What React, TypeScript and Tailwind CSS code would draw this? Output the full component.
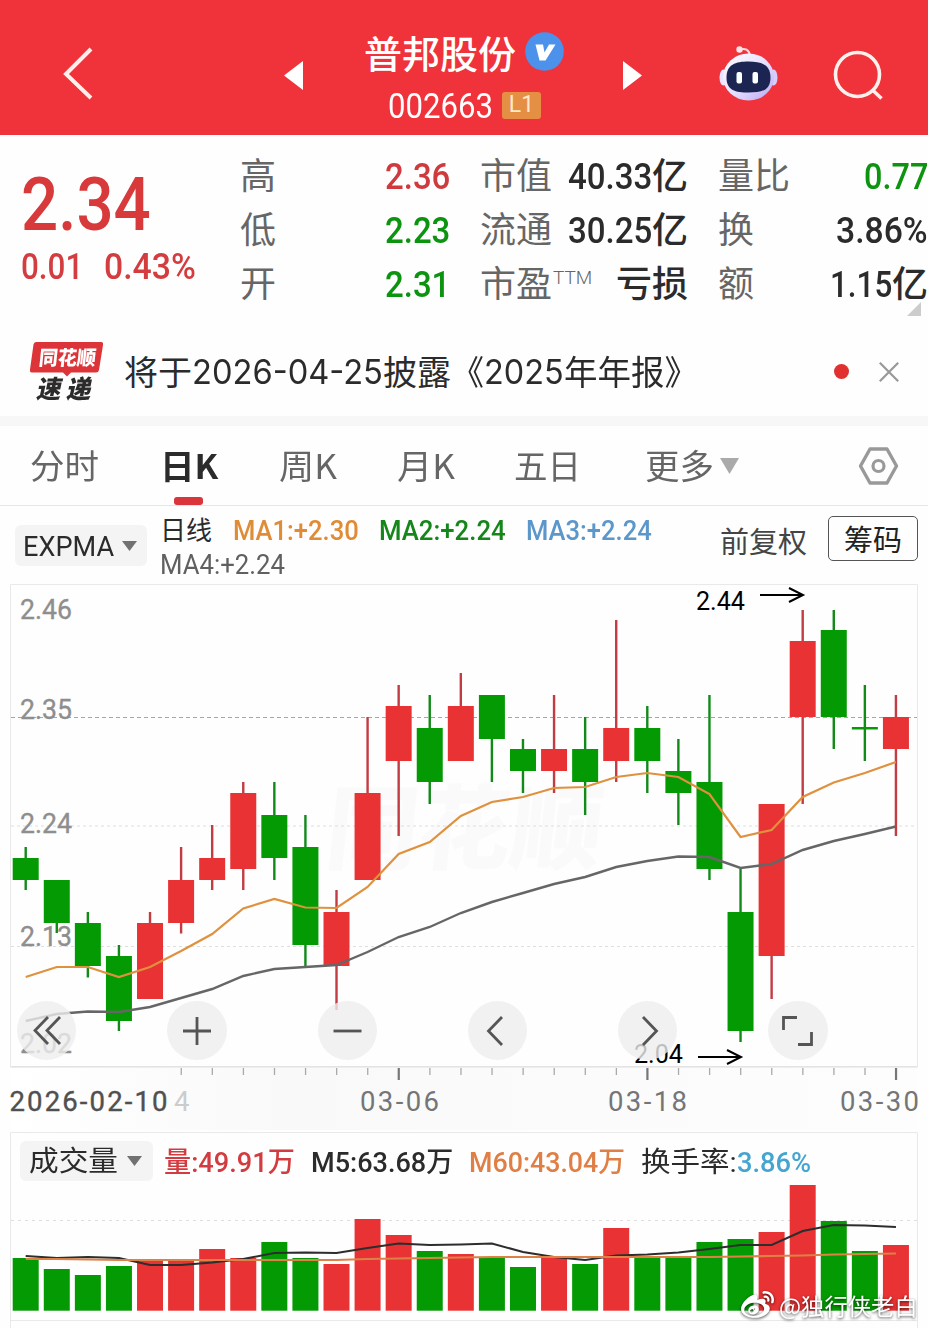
import { useLayoutEffect, useRef, type ReactNode } from "react";
import { FaWeibo } from "react-icons/fa";

const RED = "#e93234";
const GREEN = "#049a04";

/* One line of text, condensed or widened to fill the width of its box. */
function Fit({ className = "", children }: { className?: string; children: ReactNode }) {
  const box = useRef<HTMLSpanElement>(null);
  const text = useRef<HTMLSpanElement>(null);
  useLayoutEffect(() => {
    const b = box.current;
    const t = text.current;
    if (!b || !t) return;
    t.style.transform = `scaleX(${b.clientWidth / t.offsetWidth})`;
  }, []);
  return (
    <span ref={box} className={`block shrink-0 whitespace-nowrap ${className}`}>
      <span ref={text} className="inline-block origin-left">
        {children}
      </span>
    </span>
  );
}

type Candle = [string, number, number, number, number, number];

// direction, high, body top, body bottom, low, volume top
const candles: Candle[] = [
  ["g", 847, 858, 880, 890, 1258],
  ["g", 880, 880, 923, 933, 1269],
  ["g", 912, 923, 966, 977.5, 1275],
  ["g", 945, 956, 1021, 1031, 1266],
  ["r", 912, 923, 999, 999, 1260],
  ["r", 847, 880, 923, 933.5, 1260],
  ["r", 825, 858, 880, 890, 1249],
  ["r", 782, 793, 869, 890, 1258],
  ["g", 782, 815, 858, 880, 1242],
  ["g", 815, 847, 945, 967, 1258],
  ["r", 890, 912, 966, 1010, 1264],
  ["r", 717, 793, 880, 880, 1219],
  ["r", 685, 706, 761, 836, 1235],
  ["g", 695, 728, 782, 804, 1251],
  ["r", 673, 706, 761, 761, 1254],
  ["g", 695, 695, 739, 782, 1258],
  ["g", 739, 749, 771, 793, 1267],
  ["r", 695, 749, 771, 793, 1258],
  ["g", 717, 749, 782, 815, 1264],
  ["r", 620, 728, 761, 782, 1228],
  ["g", 706, 728, 761, 793, 1258],
  ["g", 739, 771, 793, 825, 1257],
  ["g", 695, 782, 869, 880, 1242],
  ["g", 869, 912, 1031, 1042, 1239],
  ["r", 804, 804, 956, 999, 1232],
  ["r", 610, 641, 717, 804, 1185],
  ["g", 610, 630, 717, 749, 1221],
  ["g", 685, 727, 729.5, 761, 1251],
  ["r", 695, 717, 749, 836, 1245],
];

const ma1 = [977, 967, 967, 977, 967, 951, 934, 908.5, 899, 907.5, 908, 887, 854, 842, 816, 802, 797, 788, 787, 777, 773, 777, 794, 837, 830, 797, 782.5, 773, 762];
const ma4 = [1021, 1014, 1011.5, 1012, 1007, 998, 989, 976, 969, 967, 965, 952, 937, 927, 913, 902, 893, 884, 877, 867, 861, 856.5, 857, 868, 864, 850, 841, 834, 826.5];
const m5 = [1256, 1258, 1257, 1258, 1265, 1265, 1262.5, 1259, 1253, 1252.5, 1253, 1248, 1243.5, 1245, 1244.5, 1243.5, 1252, 1257, 1260, 1255.5, 1254.5, 1252.5, 1249, 1245, 1245, 1231, 1225, 1225.5, 1227];
const m60 = [1259, 1259, 1259.5, 1260, 1260, 1260, 1260, 1260, 1260, 1260, 1260, 1259, 1258.5, 1258, 1257.5, 1257, 1257, 1257, 1257, 1257, 1257, 1257, 1257, 1256.5, 1256, 1255.5, 1254.5, 1254, 1253.5];

const cx = (i: number) => 25.7 + 31.08 * i;
const line = (ys: number[]) => ys.map((y, i) => `${cx(i)},${y}`).join(" ");

function Header() {
  return (
    <header className="flex h-[135px] items-start bg-[#f0323a] text-white">
      <svg className="ml-[62px] mt-[46px] h-14 w-8" viewBox="0 0 32 56" fill="none" stroke="#fff0ec" strokeWidth="4">
        <path d="M29 3 4 28 29 52" />
      </svg>
      <svg className="ml-[190px] mt-[61px] h-[29px] w-[19px]" viewBox="0 0 19 29" fill="#fff">
        <path d="M19 0v29L0 14.500Z" />
      </svg>
      <div className="ml-[61px] mt-[26px] w-[201px]">
        <div className="flex h-[52px] items-center">
          <Fit className="w-[152px] text-[38px] font-medium leading-[48px]">普邦股份</Fit>
          <svg className="ml-[9px] -mt-[1px] size-[39px]" viewBox="0 0 39 39">
            <circle cx="19.500" cy="19.500" r="19.300" fill="#4c92ea" />
            <path d="M10.500 12.500h7.500l1.500 8 4.500-8h6.500L20.500 28.500h-6Z" fill="#fff" />
          </svg>
        </div>
        <div className="ml-6 flex h-[54px] items-center">
          <Fit className="w-[105px] pt-[3px] font-['Roboto'] text-[35px] leading-[54px]">002663</Fit>
          <span className="ml-[9px] mt-px flex h-[27px] w-[39px] items-center justify-center rounded-[3px] bg-[#e58f45] font-['Roboto'] text-[23px] text-[#ffe9c8]">
            L1
          </span>
        </div>
      </div>
      <svg className="ml-[58px] mt-[61px] h-[29px] w-[19px]" viewBox="0 0 19 29" fill="#fff">
        <path d="M0 0v29l19-14.500Z" />
      </svg>
      <svg className="ml-[75px] mt-[44px] h-[58px] w-[62px]" viewBox="0 0 62 58">
        <defs>
          <linearGradient id="shell" x1="0" y1="0" x2="1" y2="1">
            <stop offset="0" stopColor="#fff" />
            <stop offset=".55" stopColor="#e4ddff" />
            <stop offset="1" stopColor="#b8a5f0" />
          </linearGradient>
        </defs>
        <path d="M23 5.500c5-1.500 9 0 10 6" fill="none" stroke="#ffd9dc" strokeWidth="2" />
        <circle cx="22.500" cy="5.500" r="3.200" fill="#ffe3e6" />
        <ellipse cx="6.500" cy="33.500" rx="4" ry="8" fill="#e9e3ff" />
        <ellipse cx="56.500" cy="33.500" rx="4" ry="8" fill="#d7ccfa" />
        <ellipse cx="31.500" cy="33" rx="25.500" ry="23.500" fill="url(#shell)" />
        <path d="M31.500 17.500c13 0 22 3 22 16s-9 15-22 15-22-2-22-15 9-16 22-16Z" fill="#1c2552" />
        <rect x="19.500" y="28" width="5.500" height="11.500" rx="2" fill="#fff" />
        <rect x="35.500" y="28" width="5.500" height="11.500" rx="2" fill="#fff" />
      </svg>
      <svg className="ml-[53px] mt-[49px] h-[54px] w-[54px]" viewBox="0 0 54 54" fill="none" stroke="#fff0ec" strokeWidth="3.600">
        <circle cx="25.500" cy="25.500" r="22" />
        <path d="m40 40.500 9.500 9" />
      </svg>
    </header>
  );
}

const LABEL = "h-[54px] text-[36px] leading-[48px] text-[#666]";
const UNIT = "text-[36px] font-medium leading-[48px]";
const VALUE = "h-[54px] font-['Roboto'] text-[37px] font-medium leading-[56px]";

function Quote() {
  return (
    <section className="relative flex h-[188px] pt-[14px]">
      <div className="ml-[21px] w-[219px] pt-[9px] font-['Roboto'] font-medium text-[#d8393b]">
        <Fit className="h-[94px] w-[130px] text-[74px] leading-[94px]">2.34</Fit>
        <div className="flex text-[36px] leading-[30px] text-[#d43d40]">
          <Fit className="w-[62px]">0.01</Fit>
          <Fit className="ml-[21px] w-[92px]">0.43%</Fit>
        </div>
      </div>
      <div className="w-[145px]">
        <div className={LABEL}>高</div>
        <div className={LABEL}>低</div>
        <div className={LABEL}>开</div>
      </div>
      <div>
        <Fit className={VALUE + " w-[65px] text-[#cf3a3f]"}>2.36</Fit>
        <Fit className={VALUE + " w-[65px] text-[#0c930f]"}>2.23</Fit>
        <Fit className={VALUE + " w-[65px] text-[#0c930f]"}>2.31</Fit>
      </div>
      <div className="ml-[30px] w-[208px] text-[#2b2b2b]">
        <div className="flex h-[54px] justify-between">
          <span className={LABEL}>市值</span>
          <div className="flex">
            <Fit className={VALUE + " w-[84px]"}>40.33</Fit>
            <span className={UNIT}>亿</span>
          </div>
        </div>
        <div className="flex h-[54px] justify-between">
          <span className={LABEL}>流通</span>
          <div className="flex">
            <Fit className={VALUE + " w-[84px]"}>30.25</Fit>
            <span className={UNIT}>亿</span>
          </div>
        </div>
        <div className="flex h-[54px]">
          <span className={LABEL}>市盈</span>
          <Fit className="ml-[1px] w-[39px] font-['Roboto'] text-[19px] font-light leading-[42px] text-[#666]">TTM</Fit>
          <span className={UNIT + " ml-auto"}>亏损</span>
        </div>
      </div>
      <div className="ml-[30px] w-[210px] text-[#2b2b2b]">
        <div className="flex h-[54px] justify-between">
          <span className={LABEL}>量比</span>
          <Fit className={VALUE + " w-[64px] text-[#0c930f]"}>0.77</Fit>
        </div>
        <div className="flex h-[54px] justify-between">
          <span className={LABEL}>换</span>
          <Fit className={VALUE + " w-[92px]"}>3.86%</Fit>
        </div>
        <div className="flex h-[54px] justify-between">
          <span className={LABEL}>额</span>
          <div className="flex">
            <Fit className={VALUE + " w-[62px]"}>1.15</Fit>
            <span className={UNIT}>亿</span>
          </div>
        </div>
      </div>
      <svg className="absolute left-[907px] top-[167px] size-[14px]" viewBox="0 0 14 14">
        <path d="M14 0v14H0Z" fill="#ccc" />
      </svg>
    </section>
  );
}

function News() {
  return (
    <section className="flex h-[103px] items-start border-b-[10px] border-[#f7f7f7] text-[#2b2b2b]">
      <div className="relative ml-[30px] mt-[19px] w-[73px] shrink-0">
        <svg className="block h-9 w-[73px]" viewBox="0 0 73 36">
          <path d="M6 0h65q2.500 0 2 3l-4 25q-.5 2.500-3 2.500H41l-4 4-4-4H2q-2.500 0-2-3L3.500 2.500Q4 0 6 0Z" fill="#dc3438" />
        </svg>
        <div className="absolute left-[9px] top-[3px]">
          <Fit className="w-[57px] -skew-x-6 text-[20px] font-black leading-6 text-white">同花顺</Fit>
        </div>
        <Fit className="-mt-[6px] ml-[8px] w-[55px] -skew-x-12 text-[25px] font-black leading-[30px]">速 递</Fit>
      </div>
      <div className="ml-[21px] flex text-[34px] leading-[96px]">
        <span>将于</span>
        <Fit className="w-[191px] pt-px font-['Inter']">2026-04-25</Fit>
        <span>披露</span>
        <Fit className="w-[33px]">《</Fit>
        <Fit className="w-[80px] pt-px font-['Inter']">2025</Fit>
        <Fit className="w-[134px]">年年报》</Fit>
      </div>
      <span className="ml-auto mt-[41px] size-[15px] rounded-full bg-[#e0302f]" />
      <svg className="ml-[30px] mr-[29px] mt-[39px] size-5" viewBox="0 0 20 20" stroke="#999" strokeWidth="2.200">
        <path d="m.8.8 18.400 18.400M19.200.8.8 19.200" />
      </svg>
    </section>
  );
}

function Tabs() {
  return (
    <nav className="flex h-20 border-b border-[#e6e6e6] text-[34px] leading-[78px] text-[#666]">
      <Fit className="ml-[30px] w-[69px]">分时</Fit>
      <div className="relative ml-[61px] w-[58px] font-bold text-[#2b2b2b]">
        <Fit className="w-[58px]">日K</Fit>
        <span className="absolute left-[14px] top-[71px] h-2 w-[29px] rounded-[3px] bg-[#d9353a]" />
      </div>
      <Fit className="ml-[61px] w-[58px]">周K</Fit>
      <Fit className="ml-[60px] w-[58px]">月K</Fit>
      <Fit className="ml-[59px] w-[67px]">五日</Fit>
      <Fit className="ml-[64px] w-[69px]">更多</Fit>
      <svg className="ml-[6px] mt-8 h-4 w-[19px]" viewBox="0 0 19 16">
        <path d="M0 0h19L9.500 16Z" fill="#aaa" />
      </svg>
      <svg className="ml-auto mr-[29px] mt-5 h-10 w-[41px]" viewBox="0 0 41 40" fill="none" stroke="#999" strokeLinejoin="round">
        <path d="M12 3h17l9.500 17L29 37H12L2.500 20Z" strokeWidth="3.400" />
        <circle cx="20.500" cy="20" r="5.500" strokeWidth="3.200" />
      </svg>
    </nav>
  );
}

function Down() {
  return (
    <svg className="h-[10px] w-[15px]" viewBox="0 0 15 10">
      <path d="M0 0h15L7.500 10Z" fill="#717171" />
    </svg>
  );
}

function Indicators() {
  return (
    <section className="flex h-[74px] text-[26px]">
      <div className="ml-[15px] mt-[19px] flex h-[41px] w-[132px] items-center rounded-md bg-[#f4f4f4] text-[#2b2b2b]">
        <Fit className="ml-[8px] mr-[8px] mt-[2px] w-[91px] font-['Roboto'] text-[28px]">EXPMA</Fit>
        <Down />
      </div>
      <div className="ml-[13px] pt-[8px] font-['Roboto','Noto_Sans_CJK_SC'] text-[28px] font-medium leading-[34px]">
        <div className="flex h-[34px]">
          <Fit className="w-[52px] text-[26px] font-normal text-[#2b2b2b]">日线</Fit>
          <Fit className="ml-[21px] w-[126px] text-[#e08b36]">MA1:+2.30</Fit>
          <Fit className="ml-[20px] w-[127px] text-[#15861a]">MA2:+2.24</Fit>
          <Fit className="ml-[20px] w-[126px] text-[#5b97cb]">MA3:+2.24</Fit>
        </div>
        <Fit className="w-[125px] font-normal text-[#606060]">MA4:+2.24</Fit>
      </div>
      <Fit className="ml-auto mt-[13px] w-[87px] text-[29px] leading-[42px] text-[#444]">前复权</Fit>
      <div className="ml-[21px] mr-[10px] mt-[10px] flex h-[45px] w-[90px] items-center justify-center rounded-[5px] border border-[#555] text-[29px] text-[#222]">
        <span className="-mt-[2px] leading-[40px]">筹码</span>
      </div>
    </section>
  );
}

function PriceChart() {
  const labels: [string, number][] = [
    ["2.46", 619],
    ["2.35", 718.5],
    ["2.24", 832.5],
    ["2.13", 946],
    ["2.02", 1053],
  ];
  return (
    <section className="relative h-[552px]">
      <svg className="block" width="928" height="552" viewBox="0 580 928 552" fontFamily="Roboto">
        <defs>
          <linearGradient id="axis" x1="0" y1="0" x2="1" y2="0">
            <stop offset="0" stopColor="#fff" />
            <stop offset=".3" stopColor="#f9f9f9" />
            <stop offset="1" stopColor="#fdfdfd" />
          </linearGradient>
        </defs>
        <rect x="11" y="1068" width="906" height="62" fill="url(#axis)" />
        <text x="322" y="862" fontFamily="Noto Sans CJK SC" fontWeight="900" fontSize="92" fill="#fafafa" transform="skewX(-6) translate(92 0)">
          同花顺
        </text>
        <g stroke="#e9e9e9" fill="none">
          <path d="M10.500 584.500H917.500V1066.500H10.500Z" />
          <path d="M10.500 1067H917.500" stroke="#dcdcdc" />
        </g>
        <path d="M11 717.500H917" stroke="#b3a58a" strokeDasharray="4 3" />
        <path d="M11 826H917M11 946.500H917" stroke="#dedede" strokeDasharray="3 3" />
        {candles.map(([d, high, top, bottom, low], i) => (
          <g key={i} fill={d === "r" ? RED : GREEN}>
            <rect x={cx(i) - 1.2} y={high} width="2.400" height={low - high} fill={d === "r" ? "#c23c44" : "#128a1a"} />
            <rect x={cx(i) - 13} y={top} width="26" height={bottom - top} />
          </g>
        ))}
        <polyline points={line(ma4)} fill="none" stroke="#666" strokeWidth="2.400" />
        <polyline points={line(ma1)} fill="none" stroke="#df913e" strokeWidth="2.200" />
        {labels.map(([t, y]) => (
          <text key={t} x="20" y={y} fontSize="28" fill="#8e8e8e" stroke="#8e8e8e" strokeWidth=".35" textLength="52" lengthAdjust="spacingAndGlyphs">
            {t}
          </text>
        ))}
        <g fontSize="26" fill="#000">
          <text x="696" y="610" textLength="49" lengthAdjust="spacingAndGlyphs">2.44</text>
          <text x="634" y="1063" textLength="49" lengthAdjust="spacingAndGlyphs">2.04</text>
        </g>
        <g stroke="#000" strokeWidth="2" fill="none">
          <path d="M760 595H802M789 588l14 7-14 7" />
          <path d="M698 1057H740M727 1050l14 7-14 7" />
        </g>
        {candles.map((_, i) =>
          i < 5 ? null : i === 12 || i === 20 || i === 28 ? (
            <rect key={i} x={cx(i) - 1} y="1068" width="2.200" height="12" fill="#777" />
          ) : (
            <rect key={i} x={cx(i) - 0.5} y="1068" width="1.300" height="7" fill="#aaa" />
          ),
        )}
        <g fontSize="27.500" fill="#757575">
          <text x="9.500" y="1110.500" textLength="158" lengthAdjust="spacing" fill="#505050" stroke="#505050" strokeWidth=".4">2026-02-10</text>
          <text x="174" y="1110.500" fill="#ccc">4</text>
          <text x="360" y="1110.500" textLength="79" lengthAdjust="spacing">03-06</text>
          <text x="608" y="1110.500" textLength="79" lengthAdjust="spacing">03-18</text>
          <text x="840" y="1110.500" textLength="79" lengthAdjust="spacing">03-30</text>
        </g>
      </svg>
      <div className="absolute left-[17px] top-[421px] flex gap-[91px]">
        {[
          "M31 16 18 29.500 31 43M43 16 30 29.500 43 43",
          "M30 16v28M16 30h28",
          "M15.500 30h28",
          "M34 16 20.500 30 34 44",
          "M25 16 38.500 30 25 44",
          "M15.500 29V16.500H29M43.500 31V43.500H30",
        ].map((d) => (
          <span key={d} className="size-[59.300px] rounded-full bg-[#eeeeee]/80">
            <svg className="size-[59px]" viewBox="0 0 59 59" fill="none" stroke="#555" strokeWidth="2.800">
              <path d={d} />
            </svg>
          </span>
        ))}
      </div>
    </section>
  );
}

function Volume() {
  return (
    <section className="relative h-[196px]">
      <div className="absolute left-5 top-[9px] flex font-['Roboto','Noto_Sans_CJK_SC'] text-[28px] leading-[42px] text-[#2b2b2b]">
        <div className="flex h-10 w-[133px] items-center rounded-md bg-[#f4f4f4]">
          <Fit className="ml-[9px] mr-[9px] mt-[2px] w-[89px]">成交量</Fit>
          <Down />
        </div>
        <Fit className="ml-[11px] mt-px w-[131px] font-medium text-[#d23c40]">量:49.91万</Fit>
        <Fit className="ml-[16px] mt-px w-[142px] font-medium">M5:63.68万</Fit>
        <Fit className="ml-[16px] mt-px w-[156px] font-medium text-[#e07f45]">M60:43.04万</Fit>
        <Fit className="ml-[16px] mt-px w-[96px]">换手率:</Fit>
        <Fit className="mt-px w-[74px] font-medium text-[#46a5d0]">3.86%</Fit>
      </div>
      <svg className="block" width="928" height="196" viewBox="0 1132 928 196">
        <g stroke="#e9e9e9" fill="none">
          <path d="M10.500 1328V1132.500H917.500V1328M10.500 1320.500H917.500" />
          <path d="M11 1220.500H917" stroke="#dedede" strokeDasharray="3 4" />
        </g>
        {candles.map(([d, , , , , v], i) => (
          <rect key={i} x={cx(i) - 13} y={v} width="26" height={1310.7 - v} fill={d === "r" ? RED : GREEN} />
        ))}
        <polyline points={line(m5)} fill="none" stroke="#2d2d2d" strokeWidth="2" />
        <polyline points={line(m60)} fill="none" stroke="#dd8247" strokeWidth="2.200" />
      </svg>
      <div className="absolute right-[10px] top-[156px] flex items-center gap-[5px] text-white drop-shadow-[0_1px_1.500px_rgba(0,0,0,0.7)]">
        <FaWeibo className="size-[33px]" />
        <Fit className="w-[139px] text-[23px] leading-[34px]">@独行侠老白</Fit>
      </div>
    </section>
  );
}

export default function App() {
  return (
    <main className="h-[1328px] w-[928px] overflow-hidden bg-[#fefefe] font-['Noto_Sans_CJK_SC',sans-serif]">
      <Header />
      <Quote />
      <News />
      <Tabs />
      <Indicators />
      <PriceChart />
      <Volume />
    </main>
  );
}
